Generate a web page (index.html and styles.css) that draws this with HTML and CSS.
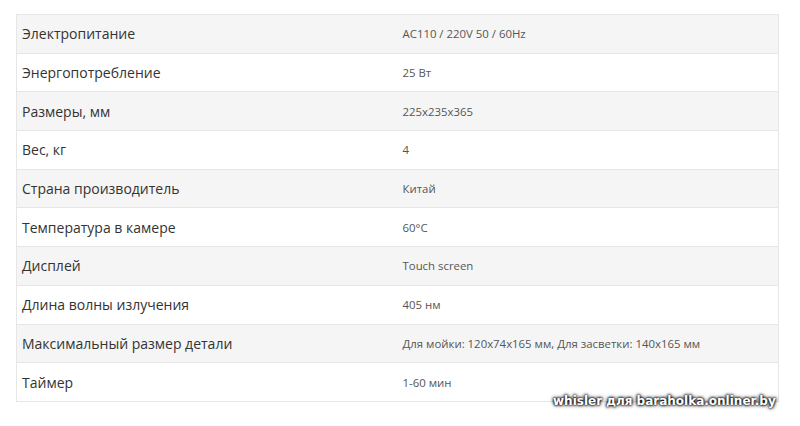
FILE: index.html
```html
<!DOCTYPE html>
<html>
<head>
<meta charset="utf-8">
<link rel="stylesheet" href="styles.css">
</head>
<body>
<div class="page">
  <table class="specs">
    <tr><td class="label">Электропитание</td><td class="value">AC110 / 220V 50 / 60Hz</td></tr>
    <tr><td class="label">Энергопотребление</td><td class="value">25 Вт</td></tr>
    <tr><td class="label">Размеры, мм</td><td class="value">225x235x365</td></tr>
    <tr><td class="label">Вес, кг</td><td class="value">4</td></tr>
    <tr><td class="label">Страна производитель</td><td class="value">Китай</td></tr>
    <tr><td class="label">Температура в камере</td><td class="value">60°C</td></tr>
    <tr><td class="label">Дисплей</td><td class="value">Touch screen</td></tr>
    <tr><td class="label">Длина волны излучения</td><td class="value">405 нм</td></tr>
    <tr><td class="label">Максимальный размер детали</td><td class="value">Для мойки: 120x74x165 мм, Для засветки: 140x165 мм</td></tr>
    <tr><td class="label">Таймер</td><td class="value">1-60 мин</td></tr>
  </table>
  <div class="watermark">whisler для baraholka.onliner.by</div>
</div>
</body>
</html>
```
FILE: styles.css
```css
html, body {
  margin: 0;
  padding: 0;
  background: #fff;
}
.page {
  position: relative;
  width: 800px;
  height: 426px;
  padding: 14px 21px 0 16px;
  box-sizing: border-box;
}
.specs {
  width: 763px;
  border-collapse: collapse;
  border: 1px solid #e6e6e6;
  font-family: "Open Sans", sans-serif;
  table-layout: fixed;
}
.specs tr {
  height: 38.7px;
}
.specs tr:nth-child(odd) {
  background: #f5f5f5;
}
.specs td {
  border-top: 1px solid #e6e6e6;
  padding: 0 5px;
  vertical-align: middle;
}
.label {
  font-size: 14px;
  color: #333;
}
.value {
  font-size: 11.4px;
  color: #555;
}
.watermark {
  position: absolute;
  left: 553px;
  top: 394px;
  font-family: "DejaVu Sans", sans-serif;
  font-weight: bold;
  font-size: 12px;
  color: #fff;
  text-shadow: 0 0 3px #000, 0 0 4px #000, 0 0 2px #000;
  white-space: nowrap;
}
```
